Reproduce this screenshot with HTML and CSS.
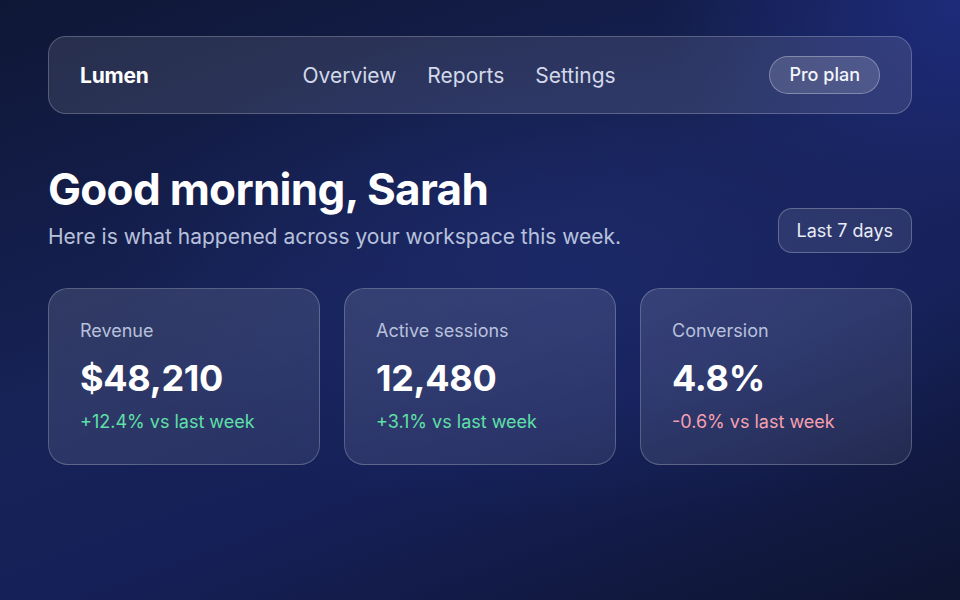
FILE: index.html
```html
<!DOCTYPE html>
<html lang="en">
<head>
<meta charset="utf-8">
<title>Lumen</title>
<link rel="stylesheet" href="styles.css">
</head>
<body>
<div class="page">
  <nav class="nav">
    <div class="logo">Lumen</div>
    <div class="links">
      <a class="link">Overview</a>
      <a class="link">Reports</a>
      <a class="link">Settings</a>
    </div>
    <div class="plan">Pro plan</div>
  </nav>
  <header class="head">
    <div class="titles">
      <h1 class="title">Good morning, Sarah</h1>
      <p class="subtitle">Here is what happened across your workspace this week.</p>
    </div>
    <div class="range">Last 7 days</div>
  </header>
  <section class="cards">
    <div class="card">
      <div class="label">Revenue</div>
      <div class="value">$48,210</div>
      <div class="delta up">+12.4% vs last week</div>
    </div>
    <div class="card">
      <div class="label">Active sessions</div>
      <div class="value">12,480</div>
      <div class="delta up">+3.1% vs last week</div>
    </div>
    <div class="card">
      <div class="label">Conversion</div>
      <div class="value">4.8%</div>
      <div class="delta down">-0.6% vs last week</div>
    </div>
  </section>
</div>
</body>
</html>
```
FILE: styles.css
```css
* { box-sizing: border-box; }
html, body { margin: 0; height: 100%; }
body {
  font-family: Inter, "Noto Sans", sans-serif;
  color: #fff;
  background:
    radial-gradient(ellipse 70% 60% at 60% 45%, rgba(32, 48, 120, 0.5), rgba(32, 48, 120, 0) 70%),
    radial-gradient(ellipse 45% 55% at 100% 0%, rgba(32, 48, 140, 0.7), rgba(32, 48, 140, 0) 70%),
    linear-gradient(160deg, #0f1736 0%, #172257 45%, #162058 65%, #0d1430 100%);
  overflow: hidden;
}
.page {
  padding: 36px 48px;
  display: flex;
  flex-direction: column;
}
.nav {
  height: 78px;
  display: flex;
  align-items: center;
  justify-content: space-between;
  padding: 0 31px;
  border-radius: 18px;
  background: rgba(255, 255, 255, 0.1);
  border: 1px solid rgba(255, 255, 255, 0.22);
}
.logo { font-size: 21px; font-weight: 700; letter-spacing: -0.2px; }
.links { display: flex; gap: 31px; }
.link { font-size: 21px; color: #d3d9ea; }
.plan {
  font-size: 18px;
  font-weight: 500;
  padding: 0 19px;
  height: 38px;
  line-height: 36px;
  border-radius: 19px;
  background: rgba(255, 255, 255, 0.14);
  border: 1px solid rgba(255, 255, 255, 0.3);
  color: #f3f5fb;
}
.head {
  margin-top: 49px;
  display: flex;
  justify-content: space-between;
  align-items: flex-end;
}
.title {
  margin: 0;
  font-size: 44px;
  line-height: 52px;
  font-weight: 700;
  letter-spacing: -0.7px;
}
.subtitle {
  margin: 9px 0 0;
  font-size: 21px;
  line-height: 26px;
  color: #b8c1dc;
}
.range {
  font-size: 18px;
  height: 45px;
  line-height: 43px;
  padding: 0 18px;
  border-radius: 14px;
  background: rgba(255, 255, 255, 0.09);
  border: 1px solid rgba(255, 255, 255, 0.25);
  color: #e8ecf6;
  margin-bottom: -3px;
}
.cards {
  margin-top: 38px;
  display: grid;
  grid-template-columns: repeat(3, 1fr);
  gap: 24px;
}
.card {
  height: 177px;
  padding: 31px 31px;
  border-radius: 20px;
  background: linear-gradient(160deg, rgba(255, 255, 255, 0.12), rgba(255, 255, 255, 0.08));
  border: 1px solid rgba(255, 255, 255, 0.22);
}
.label { font-size: 18px; line-height: 22px; color: #b8c1dc; }
.value {
  margin-top: 14px;
  font-size: 36px;
  line-height: 44px;
  font-weight: 700;
  letter-spacing: -0.3px;
}
.delta { margin-top: 11px; font-size: 18px; line-height: 22px; }
.up { color: #5ee0a8; }
.down { color: #f6a0b0; }
```
